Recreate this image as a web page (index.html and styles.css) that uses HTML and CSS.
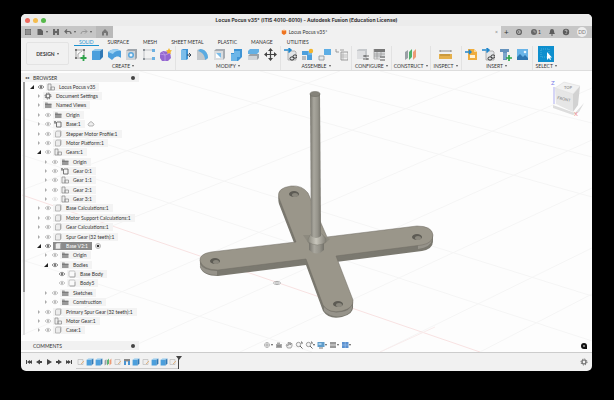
FILE: index.html
```html
<!DOCTYPE html>
<html lang="en">
  <head>
    <meta charset="UTF-8" />
    <meta name="viewport" content="width=device-width, initial-scale=1.0" />
    <title>Locus Pocus v35* - Autodesk Fusion</title>
    <link rel="stylesheet" href="styles.css">
  </head>
  <body>
    <svg class="sprite" aria-hidden="true">
      <!-- ribbon icons -->
      <symbol id="sketch" viewBox="0 0 13 13"><path d="M2 2h8v8H2z" fill="#f8f8f8" stroke="#888" stroke-width=".8"/><path d="M4 9V6l4-3" fill="none" stroke="#777" stroke-width=".6"/><path d="M1 1h2v2H1zM9 1h2v2H9zM1 9h2v2H1z" fill="#777"/><path d="M9.500 7v6M6.500 10h6" stroke="#2da44a" stroke-width="1.800"/></symbol>
      <symbol id="box" viewBox="0 0 13 13"><path d="M1 3h8v9H1z" fill="#4c9fdc"/><path d="M1 3l3-2h8L9 3z" fill="#8fc8ee"/><path d="M9 3l3-2v8l-3 3z" fill="#3179b5"/></symbol>
      <symbol id="revolve" viewBox="0 0 13 13"><path d="M0 4c3-3 9-4 13-1v7c-2-2-5-2-7 0l-2 2-4-3z" fill="#4c9fdc"/><path d="M0 4c3-3 9-4 13-1-4-1-7 1-8 3z" fill="#9bd0f2"/></symbol>
      <symbol id="hole" viewBox="0 0 13 13"><path d="M1 3l2-2h9v9l-2 2H1z" fill="#9fa6ad"/><path d="M1 3h9v9H1z" fill="#cfd3d7"/><circle cx="6" cy="7" r="3" fill="#58a7df"/><circle cx="6" cy="7" r="1.500" fill="#eef4f8"/></symbol>
      <symbol id="pattern" viewBox="0 0 13 13"><path d="M2 2h9M2 2v9h9" stroke="#a9adb1" stroke-width=".7" fill="none"/><path d="M1 1h2v2H1zM1 10h2v2H1z" fill="#8c9298"/><path d="M10 1h3v3h-3zM10 9h3v3h-3z" fill="#6cb1e2"/></symbol>
      <symbol id="form" viewBox="0 0 13 13"><path d="M1 5l3-2 7 1 1 6-3 3H3l-2-3z" fill="#9467cf"/><path d="M1 6l5 1 5-2M6 7v6M3 3l3 4" stroke="#c4a5ee" stroke-width=".7" fill="none"/><path d="M10 0l1 2 2 .5-1.500 1.500.5 2L10 5 8 6l.5-2L7 2.500l2-.5z" fill="#f2b52d"/></symbol>
      <symbol id="press" viewBox="0 0 13 13"><path d="M2 2l2-1h5v10l-2 1H2z" fill="#3f94d4"/><path d="M2 2h5v10H2z" fill="#7bbdea"/><path d="M8 7h3M10 5l2 2-2 2" stroke="#345" stroke-width="1" fill="none"/></symbol>
      <symbol id="fillet" viewBox="0 0 13 13"><path d="M1 2l2-1c6 0 9 4 9 9l-2 2H1z" fill="#c3c8cc"/><path d="M4 1c5 0 8 4 8 9l-3 2c0-5-3-8-7-9z" fill="#5aabe2"/></symbol>
      <symbol id="shell" viewBox="0 0 13 13"><path d="M1 3l2-2h9v9l-2 2H1z" fill="#a6acb2"/><path d="M1 3h9v9H1z" fill="#d9dcdf"/><path d="M3 5h5v5H3z" fill="#7abce8"/><path d="M3 5l5 5H3z" fill="#fff"/></symbol>
      <symbol id="combine" viewBox="0 0 13 13"><path d="M4 1h8v8l-2 2-2 2H1V5h3z" fill="#3f94d4"/><path d="M4 3h6v6H7v4H1V6h3z" fill="#6db6e8"/></symbol>
      <symbol id="split" viewBox="0 0 13 13"><path d="M1 3l2-2h9v3l-2 2H1z" fill="#64b0e4"/><path d="M1 8l2-2h9v4l-2 2H1z" fill="#9ba2a8"/><path d="M1 8h9v4H1z" fill="#d0d4d8"/></symbol>
      <symbol id="move" viewBox="0 0 13 13"><path d="M6.500 2v9M2 6.500h9" stroke="#444" stroke-width="1.200"/><path d="M6.500 0L9 3H4zM6.500 13L9 10H4zM0 6.500L3 4v5zM13 6.500L10 4v5z" fill="#444"/></symbol>
      <symbol id="derive" viewBox="0 0 13 13"><path d="M4 3h7l1 1v8H4z" fill="#e3e5e7" stroke="#999" stroke-width=".7"/><path d="M0 2h6M4.500 0L7 2 4.500 4.500" stroke="#2087cb" stroke-width="1.500" fill="none"/><rect x="6" y="9" width="4" height="3" rx="1.500" fill="none" stroke="#333"/><rect x="9" y="7" width="4" height="3" rx="1.500" fill="none" stroke="#333"/></symbol>
      <symbol id="component" viewBox="0 0 13 13"><path d="M1 3h6v4H1zM6 7h5v5H6z" fill="#4c9fdc"/><path d="M1 8h4v4H1z" fill="#b6babe"/><path d="M7 3h4v4H7z" fill="#71b6e7"/><circle cx="10" cy="3" r="2.200" fill="#f2b52d"/></symbol>
      <symbol id="joint" viewBox="0 0 13 13"><path d="M6 1h7v6H6z" fill="#5daee5"/><path d="M1 8h5v4H1z" fill="#e8e9ea" stroke="#8c9298" stroke-width=".8"/></symbol>
      <symbol id="list" viewBox="0 0 13 13"><path d="M1 1v3h3M5 2h4M6 4h7v8H6z" stroke="#888" stroke-width=".8" fill="none"/><path d="M8 4v8M6 7h6M6 9h6" stroke="#aaa" stroke-width=".7"/></symbol>
      <symbol id="config" viewBox="0 0 13 13"><path d="M1 2l2-1h8v9H1z" fill="#c5c8cb"/><path d="M1 3h8v8H1z" fill="#dedfe1"/><path d="M7 8h6M7 11h6" stroke="#666"/><path d="M9 7v2M11 10v2" stroke="#666"/></symbol>
      <symbol id="table" viewBox="0 0 13 13"><path d="M1 1h11v9H1z" fill="#d7d9db"/><path d="M1 1h11v3H1z" fill="#777"/><path d="M1 6h11M1 8h7M4 4v7M8 4v4M1 1v10h6" stroke="#999" stroke-width=".7" fill="none"/><path d="M7 9h5M7 12h5" stroke="#555"/></symbol>
      <symbol id="plane" viewBox="0 0 13 13"><path d="M1 4l3-2v8l-3 2z" fill="#9aa0a5"/><path d="M5 4l3-3v8l-3 3z" fill="#4fb06b"/><path d="M9 4l3-3v8l-3 3z" fill="#ed9b76"/></symbol>
      <symbol id="ruler" viewBox="0 0 13 13"><path d="M1 3h11M1 2v2M12 2v2" stroke="#777" stroke-width=".8"/><path d="M0 6h13v5H0z" fill="#e5b04c"/><path d="M2 6v2M4 6v2M6 6v2M8 6v2M10 6v2" stroke="#8a6420" stroke-width=".6"/></symbol>
      <symbol id="decal" viewBox="0 0 13 13"><path d="M3 1h6l3 3v8H3z" fill="#f0ad3e"/><path d="M9 1l3 3H9z" fill="#f8d799"/><path d="M5 7h5v3H5z" fill="#fff3d8"/><path d="M0 4h6M4 2l2 2-2 2" stroke="#2087cb" stroke-width="1.400" fill="none"/></symbol>
      <symbol id="screw" viewBox="0 0 13 13"><path d="M1 1h9v3H8v8H4V4H1z" fill="#6593bd"/><path d="M4 6h4M4 8h4M4 10h4" stroke="#a9cae6" stroke-width=".7"/><path d="M10 7v6M7 10h6" stroke="#2da44a" stroke-width="1.700"/></symbol>
      <symbol id="image" viewBox="0 0 13 13"><path d="M1 1h11v11H1z" fill="#69b4e8"/><path d="M1 12V9l3-3 3 3 2-2 3 3v2z" fill="#2e76b1"/><circle cx="9" cy="4" r="1.300" fill="#e8f5fd"/></symbol>
      <symbol id="cursor" viewBox="0 0 16 16"><path d="M0 0h16v16H0z" fill="#0e8fce"/><path d="M3 3h8v8H3z" fill="none" stroke="#57b5e0" stroke-width=".8" stroke-dasharray="1 1"/><path d="M9 6v8l2-2 1 2 1-.5-1-2h2z" fill="#fff"/></symbol>

      <!-- top bar icons -->
      <symbol id="grid" viewBox="0 0 8 8"><path d="M1 1h6v6H1z" fill="#686868"/><path d="M3 1v6M5 1v6M1 3h6M1 5h6" stroke="#c6c6c6" stroke-width=".5"/></symbol>
      <symbol id="file" viewBox="0 0 8 8"><path d="M1.500 1h3.500l2 2v4h-5.500z" fill="#606060"/></symbol>
      <symbol id="save" viewBox="0 0 8 8"><path d="M1 1h6v6H1z" fill="#666"/><path d="M3 1h2v2H3zM3 5h2v2H3z" fill="#bbb"/></symbol>
      <symbol id="undo" viewBox="0 0 8 8"><path d="M1 3.500h4q2 0 2 2.500M3 1.500l-2 2 2 2" stroke="#666" stroke-width="1.200" fill="none"/></symbol>
      <symbol id="redo" viewBox="0 0 8 8"><path d="M7 3.500H3Q1 3.500 1 6M5 1.500l2 2-2 2" stroke="#999" fill="none"/></symbol>
      <symbol id="home" viewBox="0 0 8 8"><path d="M4 1l3 3v3.500H5V5H3v2.500H1V4z" fill="#777"/></symbol>
      <symbol id="doc" viewBox="0 0 8 8"><path d="M1 2l3-1 3 1v4L4 8 1 6z" fill="#ee7320"/><path d="M1 2l3 1 3-1-3-1z" fill="#ffb071"/></symbol>
      <symbol id="sync" viewBox="0 0 8 8"><circle cx="4" cy="4" r="2.400" fill="none" stroke="#666" stroke-width="1.400"/><path d="M3 3l2 1-2 1z" fill="#666"/></symbol>
      <symbol id="clock" viewBox="0 0 8 8"><circle cx="4" cy="4" r="3" fill="#666"/><path d="M4 2v2h2" stroke="#bbb" stroke-width=".7" fill="none"/></symbol>
      <symbol id="bell" viewBox="0 0 8 8"><path d="M1 6q1-1 1-3t2-2 2 2 1 3zM3 6.500h2v1H3z" fill="#5c5c5c"/></symbol>
      <symbol id="help" viewBox="0 0 8 8"><circle cx="4" cy="4" r="3.200" fill="#5c5c5c"/><path d="M3 3q0-1 1-1t1 1-1 1.500M4 5v1" stroke="#ddd" stroke-width=".7" fill="none"/></symbol>

      <!-- browser tree icons -->
      <symbol id="eye" viewBox="0 0 8 8"><path d="M1 4q3-3.500 6 0-3 3.500-6 0z" fill="none" stroke="currentColor" stroke-width=".8"/><circle cx="4" cy="4" r="1.200" fill="currentColor"/></symbol>
      <symbol id="folder" viewBox="0 0 8 8"><path d="M1 1.500h2.500l.5 1h3.500v4.500H1z" fill="#999"/><path d="M1 3.500h6.500" stroke="#666" stroke-width=".6"/></symbol>
      <symbol id="cube" viewBox="0 0 8 8"><path d="M1.500 2.500l1-1.500h4.500v4.500l-1 1.500H1.500z" fill="#ececec" stroke="#999" stroke-width=".6"/><path d="M6 7V2.500L7 1v4.500z" fill="#aaa"/></symbol>
      <symbol id="assembly" viewBox="0 0 8 8"><path d="M1 1h3v6H1zM4 4h3.500v3H4z" fill="#eee" stroke="#888" stroke-width=".7"/></symbol>
      <symbol id="anchor" viewBox="0 0 8 8"><path d="M3 2h4v5H2.500V2M1 1v3M0 2h2" fill="none" stroke="#666" stroke-width=".9"/></symbol>
      <symbol id="body" viewBox="0 0 8 8"><rect x="1" y="1" width="6" height="6" rx="1" fill="#fafafa" stroke="#aaa" stroke-width=".6"/><path d="M2 7h5V3" stroke="#999" stroke-width=".6" fill="none"/></symbol>
      <symbol id="gear" viewBox="0 0 8 8"><circle cx="4" cy="4" r="2" fill="none" stroke="#666" stroke-width="1.200"/><circle cx="4" cy="4" r="3" fill="none" stroke="#666" stroke-dasharray="1.200 1.156"/></symbol>
      <symbol id="radio" viewBox="0 0 8 8"><circle cx="4" cy="4" r="2.500" fill="#fff" stroke="#888" stroke-width=".6"/><circle cx="4" cy="4" r="1.300" fill="#333"/></symbol>
      <symbol id="cloud" viewBox="0 0 8 8"><path d="M2 6q-2-1 0-3 2-3 4 0 2 1 0 3z" fill="#eee" stroke="#999" stroke-width=".7"/></symbol>

      <!-- view bar and timeline icons -->
      <symbol id="orbit" viewBox="0 0 8 8"><path d="M4 1v6M1 4h6" stroke="#999" stroke-width=".8"/><circle cx="4" cy="4" r="2.500" fill="none" stroke="#aaa" stroke-width=".7"/></symbol>
      <symbol id="look" viewBox="0 0 8 8"><path d="M1 3h6v4H1zM2 1.500h3V3H2z" fill="#aaa"/><path d="M2 5h4" stroke="#777"/></symbol>
      <symbol id="hand" viewBox="0 0 8 8"><path d="M2.500 7L1 4l1-.5L3 5V1.500h1V4l.5-2.500h1V4l.5-1.500h1V5L6 7z" fill="#eee" stroke="#777" stroke-width=".6"/></symbol>
      <symbol id="zoom" viewBox="0 0 8 8"><circle cx="3.500" cy="3.500" r="2.200" fill="#f4f4f4" stroke="#888" stroke-width=".8"/><path d="M5 5l2.500 2.500M6 1h1v2" stroke="#666" fill="none"/></symbol>
      <symbol id="screen" viewBox="0 0 8 8"><path d="M.500 1h7v5h-7z" fill="#5f9cca"/><path d="M1.500 2h3v2h-3z" fill="#a8d0ee"/><path d="M2 7h4" stroke="#777"/></symbol>
      <symbol id="panes" viewBox="0 0 8 8"><path d="M1 1h6v6H1z" fill="#999"/><path d="M1 4h6" stroke="#ddd"/></symbol>
      <symbol id="bluepanes" viewBox="0 0 8 8"><path d="M1 1h6.500v6H1z" fill="#5b91cf"/><path d="M4.200 1v6M1 4h6" stroke="#a9c9ee" stroke-width=".6"/></symbol>
      <symbol id="tl-sketch" viewBox="0 0 8 8"><path d="M1 1.500h5v5H1z" fill="#eee" stroke="#bbb" stroke-width=".7"/><path d="M4 6l3-3" stroke="#e3b684"/></symbol>
      <symbol id="tl-joint" viewBox="0 0 8 8"><path d="M1 1h6v2.500H1z" fill="#888"/><path d="M1 3h2v4H1zM5 3h2v4H5z" fill="#4b95d2"/></symbol>
    </svg>

    <div class="window">
      <header class="titlebar">
        <div class="lights">
          <button class="light red" aria-label="Close"></button>
          <button class="light yellow" aria-label="Minimize"></button>
          <button class="light green" aria-label="Zoom"></button>
        </div>
        <h1>Locus Pocus v35* (ITIS 4010-6010) - Autodesk Fusion (Education License)</h1>
      </header>

      <div class="tabbar">
        <div class="quick">
          <button aria-label="Data panel"><svg><use href="#grid"/></svg></button>
          <button class="caret" aria-label="File"><svg><use href="#file"/></svg></button>
          <button aria-label="Save"><svg><use href="#save"/></svg></button>
          <button class="caret" aria-label="Undo"><svg><use href="#undo"/></svg></button>
          <button class="caret" aria-label="Redo"><svg><use href="#redo"/></svg></button>
          <button class="home" aria-label="Home"><svg><use href="#home"/></svg></button>
        </div>
        <div class="doctab">
          <svg><use href="#doc"/></svg>
          <span>Locus Pocus v35*</span>
          <button class="close" aria-label="Close tab">×</button>
        </div>
        <div class="account">
          <button class="plus" aria-label="New tab">+</button>
          <button aria-label="Extensions"><svg><use href="#sync"/></svg></button>
          <button aria-label="Jobs"><svg><use href="#clock"/></svg>1</button>
          <button aria-label="Notifications"><svg><use href="#bell"/></svg></button>
          <button aria-label="Help"><svg><use href="#help"/></svg></button>
          <button class="avatar">DD</button>
        </div>
      </div>

      <div class="ribbon">
        <button class="workspace caret">DESIGN</button>
        <div class="ribbon-main">
          <nav class="ribbon-tabs">
            <button class="active">SOLID</button>
            <button>SURFACE</button>
            <button>MESH</button>
            <button>SHEET METAL</button>
            <button>PLASTIC</button>
            <button>MANAGE</button>
            <button>UTILITIES</button>
          </nav>
          <div class="groups" id="groups"></div>
        </div>
      </div>

      <main class="canvas">
        <svg class="scene" viewBox="21 71 571 281" preserveAspectRatio="xMidYMid slice">
          <defs>
            <linearGradient id="rod">
              <stop offset="0" stop-color="#77756d"/>
              <stop offset=".35" stop-color="#a9a79e"/>
              <stop offset=".7" stop-color="#96948b"/>
              <stop offset="1" stop-color="#74726a"/>
            </linearGradient>
            <linearGradient id="collar">
              <stop offset="0" stop-color="#8b897f"/>
              <stop offset=".45" stop-color="#c9c7bd"/>
              <stop offset="1" stop-color="#827f76"/>
            </linearGradient>
            <path id="cross" d="M211 252q-12 2-11 9 3 9 18 9l88-11 17 46q6 9 19 6 12-3 11-11l-17-44 86-11q11-2 11-10-1-9-16-9l-90 11-19-44q-6-8-17-7-15 2-12 12l17 44z"/>
          </defs>
          <!-- ground grid -->
          <g class="gridlines">
            <path d="M140 71l452 126M22 118l570 178M260 71l332 86M22 260l290 92M380 71l212 52M22 155l570 186"/>
            <path d="M22 190L340 71M22 262L500 71M22 335L592 88M120 352L592 140M240 352L592 188M380 352l212-104M480 352l112-58"/>
          </g>
          <path class="axis-red" d="M22 195l458 157"/>
          <path class="axis-red faint" d="M380 352l55-25"/>

          <!-- cross base: extruded sides, then the top face -->
          <g fill="#7b7970">
            <use href="#cross" y="6"/>
            <use href="#cross" y="4"/>
            <use href="#cross" y="2"/>
          </g>
          <path fill="#96938a" d="M200 264v3q4 8 17 8v-4q-13 0-17-7zM324 307v4q7 7 18 5 9-2 10-8v-4q-2 7-11 8-10 2-17-5zM418 245v4q13-2 14-9v-3q-4 7-14 8z"/>
          <use href="#cross" fill="#9a968a" stroke="#706d64" stroke-width=".5"/>
          <g fill="#5d5b54">
            <ellipse cx="294" cy="194" rx="5" ry="3"/>
            <ellipse cx="417" cy="237" rx="5" ry="3"/>
            <ellipse cx="215" cy="261" rx="5" ry="3"/>
            <ellipse cx="338" cy="304" rx="5" ry="3"/>
          </g>
          <g fill="#8a877d">
            <ellipse cx="295" cy="195" rx="3" ry="2"/>
            <ellipse cx="418" cy="238" rx="3" ry="2"/>
            <ellipse cx="216" cy="262" rx="3" ry="2"/>
            <ellipse cx="339" cy="305" rx="3" ry="2"/>
          </g>
          <!-- hub and rod -->
          <path fill="#858278" d="M303 235l8 12h10l9-8-8-4z" opacity=".6"/>
          <path fill="url(#rod)" d="M309 242h15v8q-7 7-15 0z"/>
          <path fill="url(#collar)" d="M311 234h11l4 5v3q-8 6-18 0v-3z" stroke="#77746b" stroke-width=".4"/>
          <path fill="url(#rod)" d="M310 94h10l1 142q-5 4-10 0z"/>
          <ellipse cx="315" cy="94" rx="5" ry="2.500" fill="#85837a" stroke="#66645c" stroke-width=".5"/>
          <!-- origin marker -->
          <g fill="#fff" stroke="#888" stroke-width=".6"><ellipse cx="277" cy="283" rx="3.500" ry="1.600"/><circle cx="277" cy="283" r="1.300"/></g>

          <!-- view cube -->
          <path d="M553 105l22 8 9-10-5 9-6 3-20-7z" fill="#ddd"/>
          <path d="M555 88l18 6v18l-17-8z" fill="#e6e6e6"/>
          <path d="M573 94l7-8-2 19-5 7z" fill="#d2d2d2"/>
          <path d="M555 88l9-6 16 4-7 8z" fill="#f1f1f1" stroke="#d8d8d8" stroke-width=".5"/>
          <path d="M554 104V87" stroke="#7b7be8" stroke-width=".6"/>
          <text class="cube-text" x="557" y="99" transform="rotate(12 557 99)">FRONT</text>
          <text class="cube-text" x="564" y="89">TOP</text>
          <text class="axis z" x="551" y="85">Z</text>
          <text class="axis x" x="574" y="116">X</text>
        </svg>

        <aside class="browser">
          <div class="panel-head collapse"><h2>BROWSER</h2><button class="dot" aria-label="Pin browser"></button></div>
          <div class="tree-wrap">
            <div class="scrollbar"></div>
            <ul class="tree" id="tree"></ul>
          </div>
          <div class="panel-head"><h2>COMMENTS</h2><button class="dot" aria-label="Add comment"></button></div>
        </aside>

        <div class="viewbar">
          <button class="caret" aria-label="Orbit"><svg><use href="#orbit"/></svg></button>
          <button aria-label="Look at"><svg><use href="#look"/></svg></button>
          <button aria-label="Pan"><svg><use href="#hand"/></svg></button>
          <button aria-label="Zoom"><svg><use href="#zoom"/></svg></button>
          <button class="caret" aria-label="Fit"><svg><use href="#zoom"/></svg></button>
          <button class="caret" aria-label="Display settings"><svg><use href="#screen"/></svg></button>
          <button class="caret" aria-label="Grid and snaps"><svg><use href="#panes"/></svg></button>
          <button class="caret" aria-label="Viewports"><svg><use href="#bluepanes"/></svg></button>
        </div>
        <button class="assistant" aria-label="Assistant"><svg viewBox="0 0 8 8"><path d="M1 4q0-3 3-3t3 3v3H4Q1 7 1 4z" fill="#111"/><path d="M3 4h2" stroke="#eee"/></svg></button>
      </main>

      <footer class="timeline">
        <div class="playback">
          <button aria-label="Go to start"><svg viewBox="0 0 8 8"><path d="M1 2h1v4H1zM7 2v4L4 4zM5 2v4L2 4z"/></svg></button>
          <button aria-label="Step back"><svg viewBox="0 0 8 8"><path d="M5 1.500v5L1 4zM5 3h2v2H5z"/></svg></button>
          <button aria-label="Play"><svg viewBox="0 0 8 8"><path d="M2 1l5 3-5 3z"/></svg></button>
          <button aria-label="Step forward"><svg viewBox="0 0 8 8"><path d="M3 1.500v5L7 4zM1 3h2v2H1z"/></svg></button>
          <button aria-label="Go to end"><svg viewBox="0 0 8 8"><path d="M6 2h1v4H6zM1 2v4l3-2zM3 2v4l3-2z"/></svg></button>
        </div>
        <div class="features" id="features"></div>
        <div class="marker"></div>
        <button class="settings" aria-label="Timeline settings"><svg><use href="#gear"/></svg></button>
      </footer>
    </div>

    <script>
      const groups = [
        ["CREATE", "sketch box revolve hole pattern form"],
        ["MODIFY", "press fillet shell combine split move"],
        ["ASSEMBLE", "derive component joint list"],
        ["CONFIGURE", "config table"],
        ["CONSTRUCT", "plane"],
        ["INSPECT", "ruler"],
        ["INSERT", "decal derive screw image"],
        ["SELECT", "cursor"],
      ];

      // level, name, icon, arrow, eye, extra
      const items = [
        [0, "Locus Pocus v35", "assembly", "open", "on"],
        [1, "Document Settings", "gear", "shut", ""],
        [1, "Named Views", "folder", "shut", ""],
        [1, "Origin", "folder", "shut", "off"],
        [1, "Base:1", "anchor", "shut", "off", "cloud"],
        [1, "Stepper Motor Profile:1", "cube", "shut", "off"],
        [1, "Motor Platform:1", "cube", "shut", "off"],
        [1, "Gears:1", "assembly", "open", "off"],
        [2, "Origin", "folder", "shut", "off"],
        [2, "Gear 0:1", "anchor", "shut", "off"],
        [2, "Gear 1:1", "assembly", "shut", "off"],
        [2, "Gear 2:1", "assembly", "shut", "off"],
        [2, "Gear 3:1", "assembly", "shut", "dim"],
        [1, "Base Calculations:1", "cube", "shut", "off"],
        [1, "Motor Support Calculations:1", "cube", "shut", "off"],
        [1, "Gear Calculations:1", "cube", "shut", "off"],
        [1, "Spur Gear (32 teeth):1", "cube", "shut", "off"],
        [1, "Base V2:1", "cube", "open", "on", "radio"],
        [2, "Origin", "folder", "shut", "off"],
        [2, "Bodies", "folder", "open", "on"],
        [3, "Base Body", "body", "none", "on"],
        [3, "Body5", "body", "none", "off"],
        [2, "Sketches", "folder", "shut", "off"],
        [2, "Construction", "folder", "shut", "off"],
        [1, "Primary Spur Gear (32 teeth):1", "cube", "shut", "off"],
        [1, "Motor Gear:1", "assembly", "shut", "off"],
        [1, "Case:1", "cube", "shut", "off"],
      ];

      const features =
        "tl-sketch box box plane tl-sketch tl-joint box tl-sketch box box tl-sketch";

      function icon(name) {
        return `<svg><use href="#${name}"/></svg>`;
      }

      document.getElementById("groups").innerHTML = groups
        .map(([name, icons]) => {
          const buttons = icons
            .split(" ")
            .map((i) => `<button class="tool" aria-label="${i}">${icon(i)}</button>`)
            .join("");
          return `<div class="group ${name.toLowerCase()}">
            <div class="tools">${buttons}</div>
            <button class="caret">${name}</button>
          </div>`;
        })
        .join("");

      document.getElementById("tree").innerHTML = items
        .map(([level, name, image, arrow, eye, extra]) => {
          const selected = extra === "radio" ? "selected" : "";
          return `<li class="level-${level} ${selected}">
            <button class="arrow ${arrow}" aria-label="Toggle ${name}"></button>
            ${eye ? `<button class="eye ${eye}" aria-label="Show ${name}">${icon("eye")}</button>` : ""}
            <span class="item">${icon(image)}<span class="name">${name}</span></span>
            ${extra ? icon(extra) : ""}
          </li>`;
        })
        .join("");

      document.getElementById("features").innerHTML = features
        .split(" ")
        .map((f) => `<button aria-label="${f}">${icon(f)}</button>`)
        .join("");
    </script>
  </body>
</html>
```
FILE: styles.css
```css
* {
  box-sizing: border-box;
}

body {
  margin: 0;
  height: 100vh;
  padding: 14px 22px 29px 21px;
  background: #000;
  color: #333;
  font-family: Lato, "Liberation Sans", sans-serif;
  font-size: 5px;
  line-height: 8px;
}

button {
  display: flex;
  align-items: center;
  justify-content: center;
  padding: 0;
  border: none;
  background: none;
  color: inherit;
  font: inherit;
  white-space: nowrap;
}

svg {
  display: block;
  flex: none;
  width: 8px;
  height: 8px;
}

h1,
h2 {
  margin: 0;
  font-size: 5px;
  line-height: 8px;
}

.sprite {
  position: absolute;
  width: 0;
  height: 0;
}

.caret::after {
  content: "";
  margin-left: 2px;
  border: 1px solid transparent;
  border-top: 2px solid #555;
  border-bottom: none;
}

.window {
  display: flex;
  flex-direction: column;
  height: 100%;
  overflow: hidden;
  border-radius: 5px;
  background: #f1f1f1;
}

/* title bar */
.titlebar {
  display: grid;
  grid-template-columns: 1fr auto 1fr;
  align-items: center;
  height: 12px;
  padding: 0 4px;
  background: #ececec;
}

.titlebar h1 {
  font-family: Inter, sans-serif;
  font-weight: 700;
}

.lights {
  display: flex;
  gap: 3px;
}

.light {
  width: 5px;
  height: 5px;
  border-radius: 50%;
}

.red {
  background: #ee6a5f;
}

.yellow {
  background: #f5bd4f;
}

.green {
  background: #57b94b;
}

/* document tabs */
.tabbar {
  display: flex;
  height: 12px;
  background: #c6c6c6;
}

.quick {
  display: flex;
  gap: 4px;
  width: 92px;
  padding-left: 3px;
}

.home {
  flex: 1;
  background: #b9b9b9;
}

.doctab {
  display: flex;
  flex: 1;
  align-items: center;
  justify-content: center;
  gap: 2px;
  padding-left: 5px;
  background: #f1f1f1;
}

.doctab svg {
  width: 6px;
  height: 6px;
  margin-left: auto;
}

.close {
  width: 9px;
  margin-left: auto;
  color: #777;
}

.account {
  display: flex;
  align-items: center;
  justify-content: space-between;
  width: 91px;
  padding: 0 5px 0 3px;
}

.plus {
  font-size: 8px;
}

.avatar {
  width: 10px;
  height: 10px;
  border-radius: 50%;
  background: #eee;
  color: #777;
}

/* ribbon */
.ribbon {
  display: flex;
  height: 33px;
  border-bottom: 1px solid #ddd;
}

.workspace {
  width: 43px;
  margin: 4px 0 5px 5px;
  border: 1px solid #e3e3e3;
  border-radius: 2px;
  font-weight: 700;
}

.ribbon-main {
  flex: 1;
}

.ribbon-tabs {
  display: flex;
  gap: 4px;
  padding-left: 5px;
}

.ribbon-tabs button {
  height: 8px;
  padding: 0 5px;
}

.ribbon-tabs .active {
  border-bottom: 1px solid #1a91d0;
  color: #1a91d0;
}

.groups {
  display: flex;
}

.group {
  display: flex;
  flex-direction: column;
  align-items: center;
  padding: 0 3px;
  border-right: 1px solid #e2e2e2;
}

.group.construct {
  padding: 0 2px;
}

.group.create {
  padding-left: 5px;
}

.group.select {
  border-right: none;
}

.tools {
  display: flex;
  gap: 4px;
  align-items: center;
  height: 16px;
}

.tool svg {
  width: 13px;
  height: 13px;
}

.select .tool svg {
  width: 16px;
  height: 16px;
}

/* canvas: scene, browser and view bar share one cell */
.canvas {
  display: grid;
  flex: 1;
  min-height: 0;
  overflow: hidden;
  background: #fdfdfd;
}

.canvas > * {
  grid-area: 1 / 1;
}

.scene {
  width: 100%;
  height: 100%;
  min-height: 0;
}

.gridlines {
  fill: none;
  stroke: #f5f5f5;
  stroke-width: 1;
}

.axis-red {
  fill: none;
  stroke: #f8e2e2;
  stroke-width: 1;
}

.faint {
  stroke: #f8ecec;
}

.cube-text {
  font-size: 4px;
  font-weight: 700;
  fill: #999;
}

.axis {
  font-size: 6px;
}

.z {
  fill: #7b7be8;
}

.x {
  fill: #f08a8a;
}

/* browser */
.browser {
  display: flex;
  flex-direction: column;
  justify-self: start;
  width: 118px;
  min-height: 0;
  padding: 2px 0;
}

.panel-head {
  display: flex;
  align-items: center;
  justify-content: space-between;
  height: 9px;
  padding: 0 4px 0 12px;
  background: #f1f1f1;
}

.panel-head h2 {
  font-weight: 400;
}

.collapse {
  padding-left: 4px;
}

.collapse::before {
  content: "◂◂";
  width: 8px;
  font-size: 4px;
}

.collapse h2 {
  flex: 1;
}

.dot {
  width: 4px;
  height: 4px;
  border-radius: 50%;
  background: #444;
}

.tree-wrap {
  display: flex;
  flex: 1;
  min-height: 0;
  padding-bottom: 6px;
}

.scrollbar {
  width: 2px;
  margin-left: 2px;
  background: linear-gradient(#999 83%, #ddd 83%);
}

.tree {
  display: grid;
  flex: 1;
  grid-auto-rows: 1fr;
  margin: 0;
  padding: 0;
  list-style: none;
}

.tree li {
  display: flex;
  align-items: center;
  min-height: 0;
  padding-left: 3px;
}

.tree .level-1 {
  padding-left: 10px;
}

.tree .level-2 {
  padding-left: 17px;
}

.tree .level-3 {
  padding-left: 24px;
}

.arrow {
  width: 8px;
  height: 8px;
}

.arrow.shut::before {
  content: "";
  border: 2px solid transparent;
  border-left-color: #aaa;
  border-right: none;
}

.arrow.open::before {
  content: "";
  border: 2px solid transparent;
  border-right-color: #222;
  border-bottom-color: #222;
}

.eye {
  width: 10px;
  height: 8px;
  color: #777;
}

.eye.off {
  color: #bbb;
}

.eye.dim {
  color: #e2e2e2;
}

.item {
  display: flex;
  align-items: center;
  height: 8px;
  padding: 0 4px 0 1px;
  background: #f3f3f3;
  white-space: nowrap;
}

.item + svg {
  margin-left: 2px;
}

.name {
  padding-left: 4px;
}

.selected .item {
  background: #8b8b8b;
  color: #fff;
}

/* view bar */
.viewbar {
  display: flex;
  align-items: center;
  align-self: end;
  justify-self: center;
  gap: 2px;
  height: 10px;
  margin-bottom: 2px;
}

.viewbar button::after {
  margin-left: 0;
}

.assistant {
  align-self: end;
  justify-self: end;
  margin: 0 4px 2px 0;
}

/* timeline */
.timeline {
  display: flex;
  align-items: center;
  height: 19px;
  padding: 0 4px;
  border-top: 1px solid #ccc;
}

.playback {
  display: flex;
  gap: 2px;
  fill: #444;
}

.features {
  display: grid;
  grid-auto-flow: column;
  grid-auto-columns: 1fr;
  width: 102px;
  height: 13px;
  margin-left: 3px;
  border-bottom: 1px solid #ccc;
}

.marker {
  height: 13px;
  border-left: 1px solid #444;
}

.marker::before {
  content: "";
  display: block;
  margin-left: -3px;
  border: 3px solid transparent;
  border-top: 4px solid #444;
  border-bottom: none;
}

.settings {
  margin-left: auto;
}
```
